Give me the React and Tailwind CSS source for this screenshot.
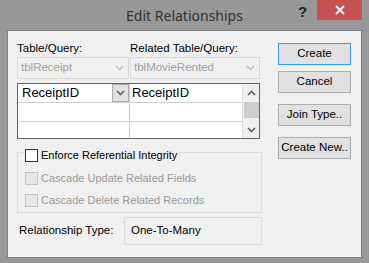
import React from "react";

const Chevron = ({ up, color = "#606060" }) => (
  <svg width="9" height="6" viewBox="0 0 9 6">
    <path d={up ? "M1 5 L4.5 1.5 L8 5" : "M1 1 L4.5 4.5 L8 1"} fill="none" stroke={color} strokeWidth="1.6" />
  </svg>
);

const Btn = ({ children, def, className = "" }) => (
  <div
    className={`w-[73px] h-[22px] flex items-center justify-center border ${
      def ? "border-[#3399ff]" : "border-[#adadad]"
    } bg-[#e1e1e1] text-[11.5px] text-black ${className}`}
  >
    {children}
  </div>
);

const Check = ({ disabled, children, legend }) => (
  <div className={`flex items-center h-[15px] ${legend ? "bg-[#f0f0f0] pr-[2px]" : ""}`}>
    <div
      className={`w-[13px] h-[13px] border ${
        disabled ? "border-[#c3c3c3] bg-[#e6e6e6]" : "border-[#333333] bg-white"
      }`}
    />
    <span className={`ml-[3px] text-[11px] ${disabled ? "text-[#9a9a9a]" : "text-black"}`}>{children}</span>
  </div>
);

export default function App() {
  return (
    <div
      className="w-[369px] h-[263px] bg-[#989898] flex flex-col px-[7px] pb-[5px]"
      style={{ fontFamily: '"Liberation Sans", Arial, sans-serif' }}
    >
      {/* title bar */}
      <div className="h-[30px] flex items-start shrink-0">
        <div className="w-[74px]" />
        <div
          className="flex-1 text-center text-[14px] text-[#333333] pt-[5px]"
          style={{ fontFamily: '"Noto Sans", "Open Sans", sans-serif' }}
        >
          Edit Relationships
        </div>
        <div className="w-[74px] flex items-start">
          <div className="w-[29px] text-center text-[15px] font-bold text-[#222] pt-[1px]">?</div>
          <div className="w-[45px] h-[20px] bg-[#c75050] flex items-center justify-center">
            <svg width="10" height="10" viewBox="0 0 10 10">
              <path d="M1 1 L9 9 M9 1 L1 9" stroke="white" strokeWidth="2" />
            </svg>
          </div>
        </div>
      </div>

      {/* client */}
      <div className="flex-1 bg-[#f0f0f0] border border-[#7f7f7f] flex pl-[9px] pt-[10px]">
        {/* left column */}
        <div className="w-[245px] flex flex-col">
          <div className="flex h-[15px] items-center text-[11.5px] text-black">
            <div className="w-[113px]">Table/Query:</div>
            <div>Related Table/Query:</div>
          </div>
          <div className="flex mt-[1px] h-[22px]">
            <div className="w-[112px] border border-[#d9d9d9] flex items-center justify-between pl-[3px] pr-[4px] text-[11.5px] text-[#a0a0a0]">
              <span>tblReceipt</span>
              <Chevron color="#c0c0c0" />
            </div>
            <div className="w-[130px] ml-[1px] border border-[#d9d9d9] flex items-center justify-between pl-[3px] pr-[4px] text-[11.5px] text-[#a0a0a0]">
              <span>tblMovieRented</span>
              <Chevron color="#c0c0c0" />
            </div>
          </div>

          {/* grid */}
          <div className="mt-[4px] w-[243px] h-[56px] border border-[#646464] bg-white flex">
            <div className="flex-1 flex flex-col">
              <div className="flex h-[19px] border-b border-[#d0d0d0]">
                <div className="w-[112px] border-r border-[#d0d0d0] flex items-center pl-[4px] text-[13px] text-black relative">
                  ReceiptID
                  <div className="absolute right-0 top-0 w-[17px] h-[18px] bg-[#e1e1e1] border border-[#adadad] flex items-center justify-center">
                    <Chevron />
                  </div>
                </div>
                <div className="flex-1 flex items-center pl-[2px] text-[13px] text-black">ReceiptID</div>
              </div>
              <div className="flex h-[19px] border-b border-[#d0d0d0]">
                <div className="w-[112px] border-r border-[#d0d0d0]" />
                <div className="flex-1" />
              </div>
              <div className="flex flex-1">
                <div className="w-[112px] border-r border-[#d0d0d0]" />
                <div className="flex-1" />
              </div>
            </div>
            <div className="w-[17px] bg-[#f0f0f0] border-l border-[#e0e0e0] flex flex-col items-center">
              <div className="h-[18px] flex items-center justify-center">
                <Chevron up />
              </div>
              <div className="w-[15px] h-[16px] bg-[#cdcdcd]" />
              <div className="flex-1" />
              <div className="h-[16px] flex items-center justify-center">
                <Chevron />
              </div>
            </div>
          </div>

          {/* group */}
          <div className="mt-[13px] h-[61px] border border-[#dcdcdc] flex flex-col pl-[7px]">
            <div className="-mt-[5px] flex">
              <Check legend>Enforce Referential Integrity</Check>
            </div>
            <div className="mt-[8px]">
              <Check disabled>Cascade Update Related Fields</Check>
            </div>
            <div className="mt-[7px]">
              <Check disabled>Cascade Delete Related Records</Check>
            </div>
          </div>

          {/* relationship type */}
          <div className="mt-[4px] flex h-[28px] items-center">
            <div className="w-[107px] pl-[2px] text-[11.5px] text-black">Relationship Type:</div>
            <div className="flex-1 h-full border border-[#dcdcdc] flex items-center pl-[6px] text-[11.5px] text-black">
              One-To-Many
            </div>
          </div>
        </div>

        {/* right column */}
        <div className="ml-[16px] flex flex-col pt-[2px]">
          <Btn def>Create</Btn>
          <Btn className="mt-[6px]">Cancel</Btn>
          <Btn className="mt-[11px]">Join Type..</Btn>
          <Btn className="mt-[11px]">Create New..</Btn>
        </div>
      </div>
    </div>
  );
}
